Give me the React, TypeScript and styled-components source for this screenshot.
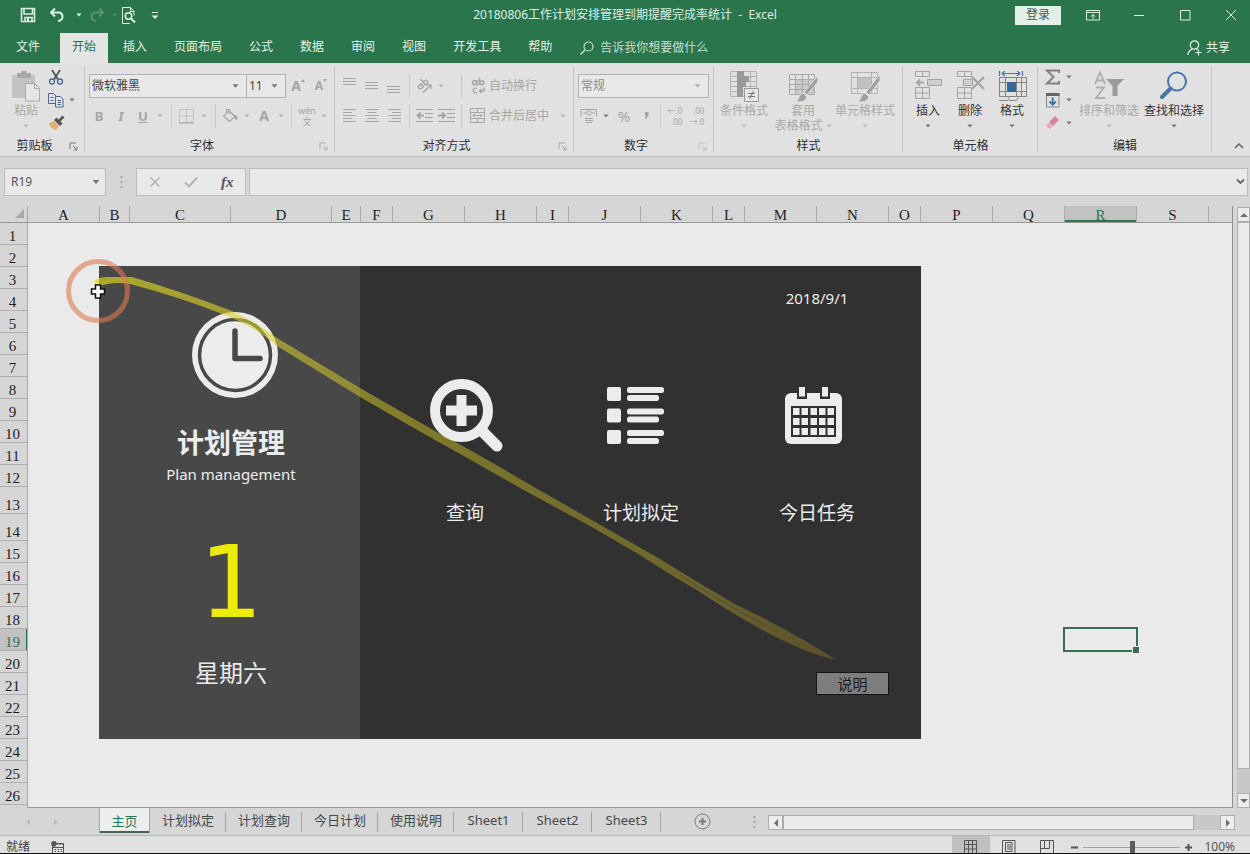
import React from "react";
import styled, { createGlobalStyle, css } from "styled-components";

const green = "#2b754d";
const ui = `"Noto Sans", "Noto Sans CJK SC", sans-serif`;
const dim = "#a6a6a6";
const dark = "#333333";

const GlobalStyle = createGlobalStyle`
  * { box-sizing: border-box; }
  body { margin: 0; background: #d6d6d6; font: 12px/16px ${ui}; color: ${dark}; }
  button, input, select { font: inherit; color: inherit; border: 0; background: none; padding: 0; margin: 0; border-radius: 0; outline: none; }
  button { display: flex; align-items: center; justify-content: center; white-space: nowrap; }
`;

const Page = styled.div`
  min-height: 100vh;
  display: flex;
  flex-direction: column;
  overflow: hidden;
`;

const Icon = styled.svg.attrs({ "aria-hidden": true })`
  display: block;
  flex: none;
  fill: none;
  stroke: currentColor;
`;

/* ---------- title bar and ribbon tabs ---------- */

const TitleBar = styled.header`
  display: grid;
  grid-template-columns: 1fr auto 1fr;
  align-items: center;
  height: 30px;
  background: ${green};
  color: #dcefe3;
`;

const QuickBar = styled.div`
  display: flex;
  align-items: center;
  padding-left: 18px;
`;

const QuickButton = styled.button<{ $w?: number; $faded?: boolean }>`
  width: ${(p) => p.$w ?? 20}px;
  height: 24px;
  opacity: ${(p) => (p.$faded ? 0.25 : 1)};
`;

const WindowBar = styled.div`
  display: flex;
  align-items: center;
  justify-content: flex-end;
  gap: 26px;
  padding-right: 9px;
`;

const SignIn = styled.button`
  width: 46px;
  height: 19px;
  margin-right: -4px;
  background: #e3efe7;
  color: #3c5c4a;
`;

const WindowButton = styled.button`
  width: 20px;
  height: 24px;
`;

const TabBar = styled.nav`
  display: flex;
  align-items: stretch;
  gap: 3px;
  height: 33px;
  padding: 3px 16px 0 4px;
  background: ${green};
  color: #e3f1e8;
`;

const RibbonTab = styled.button<{ $active?: boolean; $file?: boolean }>`
  padding: 0 12px 2px;
  margin-right: ${(p) => (p.$file ? 5 : 0)}px;
  background: ${(p) => (p.$active ? "#e3e4e3" : "transparent")};
  color: ${(p) => (p.$active ? green : "inherit")};
`;

const Tell = styled.button`
  gap: 6px;
  padding-left: 13px;
  color: #c5dfd0;
`;

const Share = styled.button`
  gap: 4px;
  margin-left: auto;
  padding-right: 4px;
`;

/* ---------- ribbon ---------- */

const Ribbon = styled.section`
  display: flex;
  height: 94px;
  padding-bottom: 1px;
  background: #e1e1e1;
  border-bottom: 1px solid #bdbdbd;
`;

const Group = styled.div<{ $w: number }>`
  display: flex;
  flex-direction: column;
  flex: none;
  width: ${(p) => p.$w}px;
  background: linear-gradient(#c4c4c4, #c4c4c4) right 4px / 1px 85px no-repeat;
`;

const GroupBody = styled.div<{ $pad?: number }>`
  display: flex;
  flex: 1;
  padding: 0 4px 0 ${(p) => p.$pad ?? 4}px;
`;

const GroupFoot = styled.div<{ $launch?: boolean }>`
  display: grid;
  grid-template-columns: ${(p) => (p.$launch ? "1fr 16px" : "1fr")};
  align-items: center;
  height: 18px;
  color: #2e2e2e;
  text-align: center;
`;

const Rows = styled.div`
  display: flex;
  flex-direction: column;
  gap: 6px;
  flex: 1;
  padding-top: 11px;
`;

const Row = styled.div`
  display: flex;
  align-items: center;
  height: 24px;
`;

const AlignRow = styled.div`
  display: grid;
  grid-template-columns: 22px 22px 22px 8px 44px 8px 1fr;
  align-items: center;
  height: 24px;
`;

const Cell = styled.div`
  display: flex;
  align-items: center;
`;

const Tool = styled.button<{ $w?: number; $on?: boolean }>`
  width: ${(p) => p.$w ?? 22}px;
  height: 24px;
  flex: none;
  color: ${(p) => (p.$on ? "#666" : dim)};
`;

const Glyph = styled.span<{ $size?: number; $italic?: boolean; $underline?: boolean }>`
  font-size: ${(p) => p.$size ?? 13}px;
  font-weight: 700;
  font-style: ${(p) => (p.$italic ? "italic" : "normal")};
  text-decoration: ${(p) => (p.$underline ? "underline" : "none")};
`;

const LabelTool = styled.button`
  justify-content: flex-start;
  gap: 3px;
  height: 24px;
  padding-left: 5px;
  color: ${dim};
  flex: 1;
`;

const Push = styled.span`
  margin-left: auto;
  padding-right: 4px;
`;

const Line = styled.span`
  width: 8px;
  height: 24px;
  flex: none;
  background: linear-gradient(#c9c9c9, #c9c9c9) center / 1px 100% no-repeat;
`;

const SelectWrap = styled.label<{ $w: number; $off?: boolean }>`
  display: grid;
  grid-template-columns: 1fr 14px;
  align-items: center;
  width: ${(p) => p.$w}px;
  height: 24px;
  border: 1px solid #b3b3b3;
  background: #e8e8e8;
  color: ${(p) => (p.$off ? "#8c8c8c" : "#444")};
  & + & { border-left: 0; }
  select { grid-area: 1 / 1 / 2 / 3; appearance: none; height: 22px; padding-left: 2px; width: 100%; }
  svg { grid-area: 1 / 2; pointer-events: none; }
`;

const Big = styled.button<{ $w: number; $on?: boolean }>`
  flex-direction: column;
  justify-content: flex-start;
  width: ${(p) => p.$w}px;
  flex: none;
  padding-top: 8px;
  line-height: 15px;
  color: ${(p) => (p.$on ? dark : "#a9a9a9")};
`;

const BigCaret = styled.span`
  display: flex;
  align-items: center;
  height: 15px;
`;

const WithCaret = styled.span`
  display: flex;
  align-items: center;
  gap: 3px;
`;

const SmallStack = styled.div<{ $w: number }>`
  display: flex;
  flex-direction: column;
  flex: none;
  width: ${(p) => p.$w}px;
  padding-top: 2px;
`;

const SmallTool = styled.button<{ $inset?: boolean }>`
  justify-content: flex-start;
  gap: 5px;
  height: 23px;
  padding-left: ${(p) => (p.$inset ? 6 : 0)}px;
  color: #666;
`;

const Collapse = styled.button`
  align-self: flex-end;
  margin-left: auto;
  width: 22px;
  height: 18px;
  color: #666;
`;

/* ---------- formula bar ---------- */

const FormulaBar = styled.div`
  display: flex;
  align-items: center;
  height: 49px;
  padding: 0 2px 0 4px;
  background: #d6d6d6;
`;

const fieldBox = css`
  display: flex;
  align-items: center;
  height: 28px;
  background: #e9e9e9;
  border: 1px solid #bcbcbc;
`;

const NameBox = styled.label`
  ${fieldBox}
  width: 102px;
  padding: 0 5px 0 6px;
  color: #555;
  input { flex: 1; min-width: 0; }
`;

const Dots = styled.span`
  width: 30px;
  display: flex;
  justify-content: center;
  color: #a5a5a5;
`;

const FormulaTools = styled.div`
  ${fieldBox}
  width: 110px;
  justify-content: space-around;
  color: #b4b4b4;
`;

const FormulaInput = styled.label`
  ${fieldBox}
  flex: 1;
  margin-left: 3px;
  padding: 0 2px 0 4px;
  color: #666;
  input { flex: 1; min-width: 0; }
`;

const Fx = styled.span`
  font: italic 700 15px/16px "Liberation Serif", serif;
  color: #555;
`;

/* ---------- sheet ---------- */

const Workbook = styled.main`
  display: flex;
  flex: 1;
  background: #d6d6d6;
`;

const Sheet = styled.div`
  display: grid;
  grid-template: 17px 1fr / 28px 1fr;
  flex: 1;
  min-width: 0;
  border-right: 1px solid #8f8f8f;
`;

const Corner = styled.button`
  align-items: flex-end;
  justify-content: flex-end;
  padding: 0 3px 4px 0;
  border-right: 1px solid #a6a6a6;
  border-bottom: 1px solid #9a9a9a;
`;

const headFont = css`
  font-family: "Liberation Serif", serif;
  font-size: 15px;
  color: #1e1e1e;
`;

const ColumnHeads = styled.div`
  display: flex;
  overflow: hidden;
  border-bottom: 1px solid #9a9a9a;
`;

const ColumnHead = styled.div<{ $w: number; $on?: boolean }>`
  ${headFont}
  flex: none;
  width: ${(p) => p.$w}px;
  height: 16px;
  line-height: 19px;
  text-align: center;
  border-right: 1px solid #ababab;
  ${(p) => p.$on && css`background: #c2c2c2; color: ${green}; box-shadow: inset 0 -2px ${green};`}
`;

const RowHeads = styled.div`
  border-right: 1px solid #a6a6a6;
`;

const RowHead = styled.div<{ $h: number; $on?: boolean }>`
  ${headFont}
  display: flex;
  align-items: flex-end;
  justify-content: center;
  height: ${(p) => p.$h}px;
  line-height: 15px;
  padding: 0 2px 0 0;
  border-bottom: 1px solid #b0b0b0;
  ${(p) => p.$on && css`background: #c2c2c2; color: ${green}; box-shadow: inset -1px 0 ${green};`}
`;

const Canvas = styled.div`
  position: relative;
  overflow: hidden;
  padding: 43px 0 0 71px;
  background: #eaeaea;
  border-bottom: 1px solid #9a9a9a;
`;

const Selection = styled.div`
  position: absolute;
  left: 1035px;
  top: 404px;
  width: 75px;
  height: 25px;
  border: 2px solid #3a6c52;
  &::after {
    content: "";
    position: absolute;
    right: -3px;
    bottom: -3px;
    width: 6px;
    height: 6px;
    background: #3a6c52;
    border: solid #eaeaea;
    border-width: 1px 0 0 1px;
  }
`;

const Ink = styled.svg`
  position: absolute;
  left: 0;
  top: 0;
  pointer-events: none;
`;

const Dashboard = styled.section`
  display: flex;
  width: 822px;
  height: 473px;
  color: #ececec;
`;

const Side = styled.div`
  display: flex;
  flex-direction: column;
  align-items: center;
  width: 261px;
  padding: 46px 0 0 3px;
  background: #484848;
`;

const SideTitle = styled.h1`
  margin: 27px 0 0;
  font-size: 27px;
  line-height: 36px;
`;

const SideSub = styled.p`
  margin: 3px 0 0;
  font-size: 15px;
  line-height: 20px;
`;

const Day = styled.div`
  margin-top: 49px;
  font: 100px/100px "DejaVu Sans", sans-serif;
  color: #ecec0c;
`;

const Weekday = styled.div`
  margin-top: 24px;
  font-size: 24px;
  line-height: 32px;
`;

const MainPane = styled.div`
  display: flex;
  flex-direction: column;
  flex: 1;
  padding: 22px 16px 0 17px;
  background: #313131;
`;

const Today = styled.time`
  align-self: flex-end;
  width: 176px;
  text-align: center;
  font-size: 15px;
  line-height: 20px;
`;

const Actions = styled.div`
  display: grid;
  grid-template-columns: repeat(3, 1fr);
  margin-top: 70px;
`;

const Action = styled.button`
  flex-direction: column;
  gap: 46px;
  font-size: 19px;
  line-height: 26px;
`;

const Help = styled.button`
  align-self: flex-end;
  width: 73px;
  height: 23px;
  margin: 146px 16px 0 0;
  background: #7d7d7d;
  border: 1px solid #151515;
  color: #1c1c1c;
  font-size: 15px;
`;

/* ---------- scroll bars, sheet tabs, status bar ---------- */

const VScroll = styled.div`
  display: flex;
  flex-direction: column;
  width: 13px;
  margin: 1px 0 0 4px;
  background: #c8c8c8;
`;

const ScrollButton = styled.button`
  flex: none;
  width: 15px;
  height: 15px;
  background: #ededed;
  border: 1px solid #adadad;
  color: #707070;
  ${VScroll} & { width: 13px; }
`;

const VThumb = styled.div`
  flex: 1;
  margin-bottom: 24px;
  background: #ebebeb;
  border: 1px solid #adadad;
`;

const SheetBar = styled.div`
  display: flex;
  align-items: flex-start;
  height: 28px;
  background: #d6d6d6;
  border-bottom: 1px solid #b8b8b8;
`;

const SheetNav = styled.div`
  display: flex;
  align-items: center;
  justify-content: center;
  gap: 20px;
  width: 99px;
  height: 27px;
  padding-right: 15px;
  color: #b9b9b9;
`;

const SheetTab = styled.button<{ $active?: boolean }>`
  height: 24px;
  min-width: 69px;
  padding: 0 12px;
  font-size: 13px;
  color: #484848;
  background: linear-gradient(#a5a5a5, #a5a5a5) right 4px / 1px 20px no-repeat;
  ${(p) =>
    p.$active &&
    css`
      height: 25px;
      min-width: 51px;
      padding: 0 11px;
      background: #ecefed;
      border: solid #a5a5a5;
      border-width: 0 1px;
      color: ${green};
      box-shadow: inset 0 -2px #3f6b54;
    `}
`;

const AddSheet = styled.button`
  width: 20px;
  height: 27px;
  margin-left: 31px;
  color: #7c7c7c;
`;

const HScroll = styled.div`
  display: flex;
  flex: 1;
  max-width: 467px;
  height: 15px;
  margin: 7px 15px 0 auto;
  background: #c8c8c8;
`;

const HThumb = styled.div`
  flex: 1;
  margin-right: 26px;
  background: #ebebeb;
  border: 1px solid #adadad;
`;

const SheetDots = styled.span`
  display: flex;
  align-items: center;
  height: 27px;
  padding-left: 41px;
  color: #a5a5a5;
`;

const StatusBar = styled.footer`
  display: flex;
  align-items: flex-start;
  height: 18px;
  padding-left: 6px;
  overflow: hidden;
  background: #e0e0e0;
  border-bottom: 1px solid #111;
  line-height: 22px;
  color: #444;
`;

const Macro = styled.button`
  width: 14px;
  height: 22px;
  margin-left: 20px;
  color: #555;
`;

const ViewButton = styled.button<{ $on?: boolean }>`
  width: 38px;
  height: 22px;
  background: ${(p) => (p.$on ? "#c0c0c0" : "transparent")};
  color: #555;
`;

const Views = styled.div`
  display: flex;
  margin-left: auto;
`;

const ZoomBox = styled.div`
  display: flex;
  align-items: center;
  height: 22px;
  gap: 4px;
  padding: 0 15px 0 4px;
  color: #555;
  button { width: 9px; height: 20px; }
  output { margin-left: 7px; }
`;

const ZoomSlider = styled.input`
  appearance: none;
  width: 97px;
  height: 12px;
  background: linear-gradient(#a0a0a0, #a0a0a0) center / 100% 1px no-repeat;
  &::-webkit-slider-thumb { appearance: none; width: 5px; height: 12px; background: #5e5e5e; }
`;

/* ---------- drawings ---------- */

const Caret = ({ c = "#777", w = 7 }: { c?: string; w?: number }) => (
  <Icon width={w} height="4" viewBox="0 0 8 4" style={{ color: c }}>
    <path d="M0.5 0h7L4 4z" fill="currentColor" stroke="none" />
  </Icon>
);

const CaretTool = ({ w = 12, c = "#b5b5b5" }: { w?: number; c?: string }) => (
  <Tool $w={w} aria-label="更多">
    <Caret c={c} w={6} />
  </Tool>
);

const Lines = ({ rows, y = 2, center, right }: { rows: number[]; y?: number; center?: boolean; right?: boolean }) => (
  <Icon width="14" height="18" viewBox="0 0 14 18">
    {rows.map((w, i) => {
      const x = center ? (14 - w) / 2 : right ? 14 - w : 0;
      return <path key={i} d={`M${x} ${y + i * 3 + 0.5}h${w}`} />;
    })}
  </Icon>
);

const Launcher = ({ c = "#aaa" }: { c?: string }) => (
  <Icon width="9" height="9" viewBox="0 0 9 9" style={{ color: c }}>
    <path d="M1 7V1h6M4 4l3 3M8 4.500v3.500h-3.500" />
  </Icon>
);

const Triangle = ({ d }: { d: string }) => (
  <Icon width="8" height="8" viewBox="0 0 8 8">
    <path d={d} fill="currentColor" stroke="none" />
  </Icon>
);

const VDots = () => (
  <Icon width="3" height="12" viewBox="0 0 3 12">
    <path d="M1.500 0v2M1.500 5v2M1.500 10v2" strokeWidth="2" />
  </Icon>
);

const TableArt = () => (
  <>
    <path d="M2.500 3.500h25v20h-25zM2.500 8.500h25M2.500 13.500h25M2.500 18.500h25M8.500 3.500v20M15.500 3.500v20M21.500 3.500v20" stroke="#a9a9a9" />
    <path d="M31 5v6L20 24l-3-3L28 8z" fill="#a0a0a0" stroke="#e1e1e1" />
    <path d="M16 22l4 4c-2 5-6 5-11 5 3-2 2-7 7-9z" fill="#a0a0a0" stroke="#e1e1e1" />
  </>
);

const columns: [string, number][] = [
  ["A", 72], ["B", 30], ["C", 101], ["D", 101], ["E", 29], ["F", 32], ["G", 72], ["H", 72], ["I", 32], ["J", 72],
  ["K", 72], ["L", 32], ["M", 72], ["N", 72], ["O", 32], ["P", 72], ["Q", 72], ["R", 72], ["S", 72],
];
const rowNumbers = Array.from({ length: 26 }, (_, i) => i + 1);
const sheetNames = ["主页", "计划拟定", "计划查询", "今日计划", "使用说明", "Sheet1", "Sheet2", "Sheet3"];
const tabNames = ["文件", "开始", "插入", "页面布局", "公式", "数据", "审阅", "视图", "开发工具", "帮助"];

const Foot = ({ text, launch }: { text: string; launch?: string }) => (
  <GroupFoot $launch={!!launch}>
    <span>{text}</span>
    {launch && <Launcher c={launch} />}
  </GroupFoot>
);

function TopBars() {
  return (
    <>
      <TitleBar>
        <QuickBar>
          <QuickButton aria-label="保存">
            <Icon width="16" height="16" viewBox="0 0 16 16">
              <path d="M1.500 1.500h13v13h-13zM4 1.500v5.500h8.500v-5.500M5 14.500v-4h7v4" strokeWidth="1.6" />
              <path d="M7 11h2v3H7z" fill="currentColor" stroke="none" />
            </Icon>
          </QuickButton>
          <QuickButton $w={38} aria-label="撤销">
            <Icon width="16" height="16" viewBox="0 0 16 16">
              <path d="M6 1.500L2 5.500l4 4M2 5.500h7c6 0 6 8 0 8.500" strokeWidth="2" />
            </Icon>
          </QuickButton>
          <Caret c="#dcefe3" w={6} />
          <QuickButton $w={30} $faded aria-label="重做">
            <Icon width="16" height="16" viewBox="0 0 16 16">
              <path d="M10 1.500l4 4-4 4M14 5.500H7c-6 0-6 8 0 8.500" strokeWidth="2" />
            </Icon>
          </QuickButton>
          <Caret c="#4c8a69" w={6} />
          <QuickButton $w={20} aria-label="打印预览">
            <Icon width="15" height="17" viewBox="0 0 15 17">
              <path d="M9 16.500H1.500V.500h8l3.500 4v4M9.500.500v4H13" />
              <circle cx="7.500" cy="9" r="3.200" strokeWidth="1.500" />
              <path d="M10 11.500l4 4" strokeWidth="2.200" />
            </Icon>
          </QuickButton>
          <QuickButton $w={34} aria-label="自定义快速访问工具栏">
            <Icon width="8" height="9" viewBox="0 0 8 9">
              <path d="M1 1.500h6" />
              <path d="M.500 4.500h7L4 8z" fill="currentColor" stroke="none" />
            </Icon>
          </QuickButton>
        </QuickBar>
        <span>20180806工作计划安排管理到期提醒完成率统计&nbsp; -&nbsp; Excel</span>
        <WindowBar>
          <SignIn>登录</SignIn>
          <WindowButton aria-label="功能区显示选项">
            <Icon width="14" height="12" viewBox="0 0 14 12">
              <path d="M.500 1.500h13v9.500H.500zM.500 3.500h13M7 10V5.500M5 7.500l2-2 2 2" />
            </Icon>
          </WindowButton>
          <WindowButton aria-label="最小化">
            <Icon width="11" height="11" viewBox="0 0 11 11"><path d="M0 5.500h10" /></Icon>
          </WindowButton>
          <WindowButton aria-label="最大化">
            <Icon width="11" height="11" viewBox="0 0 11 11"><path d="M.500.500h9.500v9.500H.500z" /></Icon>
          </WindowButton>
          <WindowButton aria-label="关闭">
            <Icon width="12" height="12" viewBox="0 0 12 12"><path d="M1 1l10 10M11 1L1 11" /></Icon>
          </WindowButton>
        </WindowBar>
      </TitleBar>
      <TabBar>
        {tabNames.map((t, i) => (
          <RibbonTab key={t} $active={i === 1} $file={i === 0}>{t}</RibbonTab>
        ))}
        <Tell>
          <Icon width="14" height="14" viewBox="0 0 14 14">
            <circle cx="8.500" cy="5.500" r="4.500" strokeWidth="1.200" />
            <path d="M5 9L.500 13.500" strokeWidth="1.400" />
          </Icon>
          告诉我你想要做什么
        </Tell>
        <Share>
          <Icon width="15" height="16" viewBox="0 0 15 16">
            <circle cx="7.500" cy="5" r="4.200" strokeWidth="1.200" />
            <path d="M.800 15c.300-3.500 2-5 4.500-6M9.500 8.500l1 1M11.500 9.500v6M8.500 12.500h6" strokeWidth="1.200" />
          </Icon>
          共享
        </Share>
      </TabBar>
    </>
  );
}

function RibbonPanel() {
  return (
    <Ribbon>
      <Group $w={85}>
        <GroupBody $pad={10}>
          <Big $w={32}>
            <Icon width="30" height="32" viewBox="0 0 30 32">
              <path d="M1 4h23v23H1z" fill="#c3c3c3" stroke="none" />
              <path d="M6 2h4a3 3 0 0 1 6 0h4v5H6z" fill="#a8a8a8" stroke="none" />
              <path d="M14.500 12.500h9l5 5v12.500h-14zM23.500 12.500v5h5" fill="#e6e6e6" stroke="#a9a9a9" />
            </Icon>
            粘贴
            <BigCaret><Caret c="#b5b5b5" w={6} /></BigCaret>
          </Big>
          <SmallStack $w={32}>
            <SmallTool $inset aria-label="剪切">
              <Icon width="16" height="16" viewBox="0 0 16 16">
                <path d="M4 1l6 9.500M12 1L6 10.500" stroke="#555" strokeWidth="1.800" />
                <circle cx="4" cy="12.500" r="2.500" stroke="#4a6690" strokeWidth="1.300" />
                <circle cx="12" cy="12.500" r="2.500" stroke="#4a6690" strokeWidth="1.300" />
              </Icon>
            </SmallTool>
            <SmallTool $inset aria-label="复制">
              <Icon width="16" height="16" viewBox="0 0 16 16" style={{ color: "#4a6690" }}>
                <path d="M7 11.500H.500V1.500h5l3 3M2.500 5.500h3M2.500 8.500h3" />
                <path d="M7.500 4.500h5l2.500 2.500v8H7.500zM9.500 8.500h3.500M9.500 10.500h3.500M9.500 12.500h3.500" fill="#e6e6e6" />
              </Icon>
              <Caret w={6} />
            </SmallTool>
            <SmallTool $inset aria-label="格式刷">
              <Icon width="17" height="16" viewBox="0 0 17 16">
                <path d="M1 8l5-2 5 5-3 4c-3 0-6-3-7-7z" fill="#e0b06c" stroke="none" />
                <path d="M6 5l6 6 2.500-2.500-6-6z" fill="#555" stroke="none" />
                <path d="M11 6l4.500-4.500" stroke="#555" strokeWidth="2.600" />
              </Icon>
            </SmallTool>
          </SmallStack>
        </GroupBody>
        <Foot text="剪贴板" launch="#777" />
      </Group>

      <Group $w={250}>
        <GroupBody>
          <Rows>
            <Row>
              <SelectWrap $w={158}>
                <select aria-label="字体"><option>微软雅黑</option></select>
                <Caret />
              </SelectWrap>
              <SelectWrap $w={39}>
                <select aria-label="字号"><option>11</option></select>
                <Caret />
              </SelectWrap>
              <Tool $w={24} aria-label="增大字号">
                <Glyph $size={14}>A</Glyph>
                <Icon width="4" height="14" viewBox="0 0 4 14"><path d="M0 3l2-3 2 3z" fill="currentColor" stroke="none" /></Icon>
              </Tool>
              <Tool $w={22} aria-label="减小字号">
                <Glyph $size={12}>A</Glyph>
                <Icon width="4" height="14" viewBox="0 0 4 14"><path d="M0 0l2 3 2-3z" fill="currentColor" stroke="none" /></Icon>
              </Tool>
            </Row>
            <Row>
              <Tool $w={20}><Glyph>B</Glyph></Tool>
              <Tool $w={24}><Glyph $italic>I</Glyph></Tool>
              <Tool $w={20}><Glyph $underline>U</Glyph></Tool>
              <CaretTool w={14} />
              <Line />
              <Tool aria-label="边框">
                <Icon width="15" height="15" viewBox="0 0 15 15">
                  <path d="M.500.500h14v13H.500zM7.500.500v13M.500 7h14" strokeDasharray="1 1" />
                  <path d="M0 14h15" />
                </Icon>
              </Tool>
              <CaretTool w={14} />
              <Line />
              <Tool aria-label="填充颜色">
                <Icon width="16" height="16" viewBox="0 0 16 16">
                  <path d="M7 3l6 5.500-5.500 5L1.500 8zM4.500 6V1.500h3V6" strokeWidth="1.200" />
                  <path d="M13 7c2 2 2.500 3 1.500 5-1.500-1-1.500-3-1.500-5z" fill="currentColor" />
                </Icon>
              </Tool>
              <CaretTool />
              <Tool><Glyph $size={14}>A</Glyph></Tool>
              <CaretTool />
              <Line />
              <Tool $w={24} aria-label="拼音指南">
                <Pinyin>
                  <span>wén</span>
                  <span>文</span>
                </Pinyin>
              </Tool>
              <CaretTool w={10} />
            </Row>
          </Rows>
        </GroupBody>
        <Foot text="字体" launch="#aaa" />
      </Group>

      <Group $w={239}>
        <GroupBody>
          <Rows>
            <AlignRow>
              <Tool aria-label="顶端对齐"><Lines rows={[13, 13, 13]} y={1} /></Tool>
              <Tool aria-label="垂直居中"><Lines rows={[13, 13, 13]} y={5} /></Tool>
              <Tool aria-label="底端对齐"><Lines rows={[13, 13, 13]} y={9} /></Tool>
              <Line />
              <Cell>
                <Tool aria-label="方向">
                  <Icon width="18" height="18" viewBox="0 0 18 18">
                    <g transform="rotate(-40 7 7)">
                      <circle cx="4" cy="8" r="2" strokeWidth="1.300" />
                      <path d="M6.500 5.500v5M9 2.500v8" strokeWidth="1.300" />
                      <circle cx="11" cy="8" r="2" strokeWidth="1.300" />
                    </g>
                    <path d="M8 15.500L16 8M16 12V8h-4" strokeWidth="1.300" />
                  </Icon>
                </Tool>
                <CaretTool />
              </Cell>
              <Line />
              <LabelTool>
                <Icon width="16" height="18" viewBox="0 0 16 18">
                  <circle cx="4.500" cy="5.800" r="2" strokeWidth="1.500" />
                  <path d="M7 3v5.500M9.500 .500v8" strokeWidth="1.500" />
                  <circle cx="11.800" cy="5.800" r="2" strokeWidth="1.500" />
                  <path d="M7 11.500c-5-2-5.500 5.500 0 4.200M14 10.500v3.500H9.500M11.500 12l-2 2 2 2" strokeWidth="1.400" />
                </Icon>
                自动换行
              </LabelTool>
            </AlignRow>
            <AlignRow>
              <Tool aria-label="左对齐"><Lines rows={[13, 9, 13, 9, 13]} /></Tool>
              <Tool aria-label="居中"><Lines rows={[13, 9, 13, 9, 13]} center /></Tool>
              <Tool aria-label="右对齐"><Lines rows={[13, 9, 13, 9, 13]} right /></Tool>
              <Line />
              <Cell>
                <Tool aria-label="减少缩进量">
                  <Icon width="17" height="14" viewBox="0 0 17 14">
                    <path d="M0 .500h17M9 4.500h8M9 8.500h8M0 12.500h17" />
                    <path d="M1 6.500h7M4.500 3.500L1.500 6.500l3 3" strokeWidth="1.800" />
                  </Icon>
                </Tool>
                <Tool aria-label="增加缩进量">
                  <Icon width="17" height="14" viewBox="0 0 17 14">
                    <path d="M0 .500h17M9 4.500h8M9 8.500h8M0 12.500h17" />
                    <path d="M0 6.500h7M4 3.500l3 3-3 3" strokeWidth="1.800" />
                  </Icon>
                </Tool>
              </Cell>
              <Line />
              <LabelTool>
                <Icon width="16" height="16" viewBox="0 0 16 16">
                  <path d="M.500.500h14v14H.500zM.500 4.500h14M.500 10.500h14M7.500 .500v4M7.500 10.500v4M3 7.500h9M5 5.500L3 7.500l2 2M10 5.500l2 2-2 2" />
                </Icon>
                合并后居中
                <Push><Caret c="#b5b5b5" w={6} /></Push>
              </LabelTool>
            </AlignRow>
          </Rows>
        </GroupBody>
        <Foot text="对齐方式" launch="#aaa" />
      </Group>

      <Group $w={140}>
        <GroupBody>
          <Rows>
            <Row>
              <SelectWrap $w={131} $off>
                <select aria-label="数字格式"><option>常规</option></select>
                <Caret c="#b5b5b5" />
              </SelectWrap>
            </Row>
            <Row>
              <Tool aria-label="会计数字格式">
                <Icon width="18" height="16" viewBox="0 0 18 16">
                  <path d="M1 8.500V1.500h15.500v7M3 5h3M12 5h3" />
                  <circle cx="9" cy="5" r="2.200" />
                  <path d="M5 10.500h8M5 12.500h8M6 14.500h6" />
                </Icon>
              </Tool>
              <CaretTool c="#777" />
              <Tool $w={24}><PlainGlyph>%</PlainGlyph></Tool>
              <Tool $w={20} aria-label="千位分隔样式">
                <Icon width="5" height="8" viewBox="0 0 5 8"><path d="M1 0h3.500v3.500L2 7H.500L2 4H1z" fill="currentColor" stroke="none" /></Icon>
              </Tool>
              <Line />
              <Tool aria-label="增加小数位数"><Decimals><span>←.0</span><span>.00</span></Decimals></Tool>
              <Tool aria-label="减少小数位数"><Decimals><span>.00</span><span>→.0</span></Decimals></Tool>
            </Row>
          </Rows>
        </GroupBody>
        <Foot text="数字" launch="#bbb" />
      </Group>

      <Group $w={189}>
        <GroupBody $pad={0}>
          <Big $w={60}>
            <Icon width="32" height="32" viewBox="0 0 32 32">
              <path d="M2.500 .500h26v25h-26zM2.500 5.500h26M2.500 10.500h26M2.500 15.500h26M2.500 20.500h26M9.500 .500v25M22.500 .500v25" stroke="#b3b3b3" />
              <path d="M9 0h7v5h-7zM9 5h12v6H9zM9 11h9v5H9zM9 16h6v10H9z" fill="#9a9a9a" stroke="none" />
              <path d="M16.500 17.500h14v13h-14z" fill="#e6e6e6" stroke="#9a9a9a" />
              <path d="M20 22.500h7M20 25.500h7M25.500 20l-4 8" stroke="#777" />
            </Icon>
            条件格式
            <BigCaret><Caret c="#bdbdbd" w={6} /></BigCaret>
          </Big>
          <Big $w={58}>
            <Icon width="32" height="32" viewBox="0 0 32 32">
              <path d="M8 8h20v16H8z" fill="#c9c9c9" stroke="none" />
              <TableArt />
            </Icon>
            套用
            <WithCaret>表格格式 <Caret c="#bdbdbd" w={6} /></WithCaret>
          </Big>
          <Big $w={66}>
            <Icon width="32" height="32" viewBox="0 0 32 32">
              <path d="M2.500 1.500h26v21h-26zM2.500 6.500h26M2.500 17.500h26M8.500 1.500v21M22.500 1.500v21" stroke="#b3b3b3" />
              <path d="M9 7h13v10H9z" fill="#c0c0c0" stroke="none" />
              <path d="M31 4v6L20 24l-3-3L28 7z" fill="#a0a0a0" stroke="#e1e1e1" />
              <path d="M16 22l4 4c-2 5-6 5-11 5 3-2 2-7 7-9z" fill="#a0a0a0" stroke="#e1e1e1" />
            </Icon>
            单元格样式
            <BigCaret><Caret c="#bdbdbd" w={6} /></BigCaret>
          </Big>
        </GroupBody>
        <Foot text="样式" />
      </Group>

      <Group $w={135}>
        <GroupBody>
          <Big $w={42} $on>
            <Icon width="32" height="32" viewBox="0 0 32 32" style={{ color: "#a3a3a3" }}>
              <path d="M3.500 .500h14v5h-14zM10.500 .500v5M3.500 16.500h14v11h-14zM10.500 16.500v11M3.500 22h14" />
              <path d="M5 11.500h7M8 8.500l-3 3 3 3" strokeWidth="1.800" />
              <path d="M15.500 8.500h14v6h-14z" fill="#cfcfcf" />
            </Icon>
            插入
            <BigCaret><Caret w={6} /></BigCaret>
          </Big>
          <Big $w={42} $on>
            <Icon width="32" height="32" viewBox="0 0 32 32" style={{ color: "#a3a3a3" }}>
              <path d="M3.500 .500h14v5h-14zM10.500 .500v5M3.500 16.500h14v11h-14zM10.500 16.500v11M3.500 22h14" />
              <path d="M9.500 8.500h9v6h-9z" fill="#cfcfcf" />
              <path d="M18 6l12 12M30 6L18 18" strokeWidth="2.200" />
            </Icon>
            删除
            <BigCaret><Caret w={6} /></BigCaret>
          </Big>
          <Big $w={42} $on>
            <Icon width="32" height="32" viewBox="0 0 32 32">
              <path d="M3.500 0v5M26.500 0v5M6 2.500h18M9 0L6 2.500 9 5M21 0l3 2.500L21 5" stroke="#4a76ab" strokeWidth="1.200" />
              <path d="M3.500 6.500h27v19h-27zM3.500 11.500h27M3.500 20.500h27M9.500 6.500v19M20.500 6.500v19M25.500 6.500v19" stroke="#858585" />
              <path d="M11 11h9v10h-9z" fill="#38669f" stroke="none" />
              <path d="M3 29.500h7c2 0 3-1 3-3M13 29.500h6c2 0 3-1 3-3" stroke="#858585" />
            </Icon>
            格式
            <BigCaret><Caret w={6} /></BigCaret>
          </Big>
        </GroupBody>
        <Foot text="单元格" />
      </Group>

      <Group $w={174}>
        <GroupBody $pad={7}>
          <SmallStack $w={31}>
            <SmallTool aria-label="自动求和">
              <Icon width="16" height="16" viewBox="0 0 16 16"><path d="M14 4V1.500H2L8.500 8 2 14.500h12V12" strokeWidth="2" stroke="#808080" /></Icon>
              <Caret w={6} />
            </SmallTool>
            <SmallTool aria-label="填充">
              <Icon width="16" height="16" viewBox="0 0 16 16">
                <path d="M1.500 1.500h12.500v13.500H1.500z" stroke="#888" />
                <path d="M1 1h13.500v3H1z" fill="#666" stroke="none" />
                <path d="M7.700 5.500v7M4.500 9.500l3.200 3.200 3.200-3.200" stroke="#3d6cad" strokeWidth="1.800" />
              </Icon>
              <Caret w={6} />
            </SmallTool>
            <SmallTool aria-label="清除">
              <Icon width="16" height="14" viewBox="0 0 16 14">
                <path d="M10 0l4 4-6 6-4-4z" fill="#da819b" stroke="none" />
                <path d="M3.500 6.500l4 4L5 13 1 10z" fill="#e8a6b8" stroke="none" />
              </Icon>
              <Caret w={6} />
            </SmallTool>
          </SmallStack>
          <Big $w={66}>
            <Icon width="32" height="32" viewBox="0 0 32 32">
              <path d="M2 13L7 1.500 12 13M4 9.500h6M3 16.500h8L3 27h9" stroke="#adadad" strokeWidth="1.800" />
              <path d="M13 8h18l-6.500 7v10h-5V15z" fill="#9c9c9c" stroke="none" />
            </Icon>
            排序和筛选
            <BigCaret><Caret c="#bdbdbd" w={6} /></BigCaret>
          </Big>
          <Big $w={64} $on>
            <Icon width="32" height="32" viewBox="0 0 32 32">
              <circle cx="19" cy="10.500" r="9" stroke="#4b75a8" strokeWidth="2" />
              <path d="M12.500 17.500L4 26" stroke="#4b75a8" strokeWidth="4" strokeLinecap="round" />
            </Icon>
            查找和选择
            <BigCaret><Caret w={6} /></BigCaret>
          </Big>
        </GroupBody>
        <Foot text="编辑" />
      </Group>
      <Collapse aria-label="折叠功能区">
        <Icon width="10" height="6" viewBox="0 0 10 6"><path d="M1 5l4-4 4 4" strokeWidth="1.600" /></Icon>
      </Collapse>
    </Ribbon>
  );
}

const Pinyin = styled.span`
  display: grid;
  font-size: 9px;
  line-height: 11px;
  text-align: center;
`;

const PlainGlyph = styled.span`
  font-size: 15px;
`;

const Decimals = styled.span`
  display: grid;
  font: 8px/11px ${ui};
  text-align: right;
`;

function DashboardView() {
  return (
    <Dashboard>
      <Side>
        <Icon width="94" height="86" viewBox="-8 0 94 86">
          <circle cx="43" cy="43" r="43" fill="#ececec" stroke="none" />
          <circle cx="43" cy="43" r="35.500" stroke="#484848" strokeWidth="3.500" />
          <path d="M43 19v27.500h25" stroke="#484848" strokeWidth="5.500" strokeLinecap="round" strokeLinejoin="round" />
        </Icon>
        <SideTitle>计划管理</SideTitle>
        <SideSub>Plan management</SideSub>
        <Day>1</Day>
        <Weekday>星期六</Weekday>
      </Side>
      <MainPane>
        <Today dateTime="2018-09-01">2018/9/1</Today>
        <Actions>
          <Action>
            <Icon width="76" height="76" viewBox="0 0 76 76">
              <circle cx="34.500" cy="32.500" r="26.500" strokeWidth="10" />
              <path d="M34.500 17v31M19 32.500h31" strokeWidth="10" />
              <path d="M54 52l16 16" strokeWidth="11" strokeLinecap="round" />
            </Icon>
            查询
          </Action>
          <Action>
            <Icon width="76" height="76" viewBox="0 0 76 76">
              {[9, 30.5, 52].map((y) => (
                <g key={y} fill="currentColor" stroke="none">
                  <rect x="4" y={y} width="14" height="14" rx="2" />
                  <rect x="24" y={y} width="37" height="6" rx="2.500" />
                  <rect x="24" y={y + 8} width="32" height="6" rx="2.500" />
                </g>
              ))}
            </Icon>
            计划拟定
          </Action>
          <Action>
            <Icon width="76" height="76" viewBox="0 0 76 76">
              <rect x="6" y="15" width="57" height="51" rx="6" fill="currentColor" stroke="none" />
              <path d="M18 9h10v12H18zM41 9h10v12H41zM12 28h45v31H12z" fill="#313131" stroke="none" />
              <path d="M20 9h6v9.500h-6zM43 9h6v9.500h-6z" fill="currentColor" stroke="none" />
              {[30, 40, 50].map((y) =>
                [14, 22.500, 31.500, 40, 48.500].map((x) => (
                  <rect key={`${x}-${y}`} x={x} y={y} width="6.500" height="7" fill="currentColor" stroke="none" />
                ))
              )}
            </Icon>
            今日任务
          </Action>
        </Actions>
        <Help>说明</Help>
      </MainPane>
    </Dashboard>
  );
}

function SheetView() {
  return (
    <Workbook>
      <Sheet>
        <Corner aria-label="全选">
          <Icon width="9" height="9" viewBox="0 0 9 9"><path d="M9 0v9H0z" fill="#a9a9a9" stroke="none" /></Icon>
        </Corner>
        <ColumnHeads>
          {columns.map(([name, w]) => (
            <ColumnHead key={name} $w={w} $on={name === "R"}>{name}</ColumnHead>
          ))}
        </ColumnHeads>
        <RowHeads>
          {rowNumbers.map((n) => (
            <RowHead key={n} $h={n === 13 || n === 14 ? 27 : 22} $on={n === 19}>{n}</RowHead>
          ))}
        </RowHeads>
        <Canvas>
          <DashboardView />
          <Selection />
          <Ink width="820" height="460" viewBox="28 223 820 460">
            <defs>
              <linearGradient id="ink" gradientUnits="userSpaceOnUse" x1="95" y1="280" x2="836" y2="660">
                <stop offset="0" stopColor="#e2da1e" stopOpacity="0.66" />
                <stop offset="0.2" stopColor="#d8d02c" stopOpacity="0.58" />
                <stop offset="0.5" stopColor="#c8be24" stopOpacity="0.48" />
                <stop offset="0.8" stopColor="#c4b428" stopOpacity="0.4" />
                <stop offset="1" stopColor="#b89a20" stopOpacity="0.3" />
              </linearGradient>
            </defs>
            <path
              fill="url(#ink)"
              d="M94 281Q98 277 108 277L132 277Q180 291 232 311Q256 322 277 338Q320 364 360 388Q398 410 435 431Q480 455 520 479L590 519L660 559Q700 584 735 604Q800 636 836 660Q812 655 780 639Q740 619 700 592Q670 575 640 555L590 526L520 488Q480 465 435 440Q398 419 360 397L277 346Q256 328 230 317Q180 297 130 284Q110 281 95 288Z"
            />
            <path fill="none" stroke="#313131" strokeOpacity="0.4" d="M680 575Q715 599 765 625" />
            <circle cx="98" cy="291" r="29.500" fill="none" stroke="#dc7a52" strokeOpacity="0.6" strokeWidth="5" />
            <path
              fill="#ffffff"
              stroke="#111111"
              strokeWidth="1.500"
              d="M95.500 285h5v4h4v5h-4v4h-5v-4h-4v-5h4z"
            />
          </Ink>
        </Canvas>
      </Sheet>
      <VScroll>
        <ScrollButton aria-label="向上滚动"><Triangle d="M0 6h8L4 2z" /></ScrollButton>
        <VThumb />
        <ScrollButton aria-label="向下滚动"><Triangle d="M0 2h8L4 6z" /></ScrollButton>
      </VScroll>
    </Workbook>
  );
}

export default function App() {
  return (
    <Page>
      <GlobalStyle />
      <TopBars />
      <RibbonPanel />
      <FormulaBar>
        <NameBox>
          <input aria-label="名称框" defaultValue="R19" />
          <Caret w={8} />
        </NameBox>
        <Dots><VDots /></Dots>
        <FormulaTools>
          <button aria-label="取消">
            <Icon width="12" height="12" viewBox="0 0 12 12"><path d="M1.500 1.500l9 9M10.500 1.500l-9 9" strokeWidth="1.600" /></Icon>
          </button>
          <button aria-label="输入">
            <Icon width="14" height="12" viewBox="0 0 14 12"><path d="M1 6.500l4 4L13 1.500" strokeWidth="2" /></Icon>
          </button>
          <button aria-label="插入函数"><Fx>fx</Fx></button>
        </FormulaTools>
        <FormulaInput>
          <input aria-label="编辑栏" />
          <Icon width="9" height="7" viewBox="0 0 9 7"><path d="M1 1.500l3.500 3.500L8 1.500" strokeWidth="1.800" /></Icon>
        </FormulaInput>
      </FormulaBar>
      <SheetView />
      <SheetBar>
        <SheetNav>
          <Triangle d="M6 1v6L2 4z" />
          <Triangle d="M2 1v6l4-3z" />
        </SheetNav>
        {sheetNames.map((n, i) => (
          <SheetTab key={n} $active={i === 0}>{n}</SheetTab>
        ))}
        <AddSheet aria-label="新工作表">
          <Icon width="17" height="17" viewBox="0 0 17 17">
            <circle cx="8.500" cy="8.500" r="7.500" />
            <path d="M8.500 5v7M5 8.500h7" strokeWidth="2" />
          </Icon>
        </AddSheet>
        <SheetDots><VDots /></SheetDots>
        <HScroll>
          <ScrollButton aria-label="向左滚动"><Triangle d="M6 0v8L2 4z" /></ScrollButton>
          <HThumb />
          <ScrollButton aria-label="向右滚动"><Triangle d="M2 0v8l4-4z" /></ScrollButton>
        </HScroll>
      </SheetBar>
      <StatusBar>
        <span>就绪</span>
        <Macro aria-label="宏录制">
          <Icon width="13" height="13" viewBox="0 0 13 13">
            <path d="M1.500 4v8.500h11v-10H6M1.500 6.500h11M3.500 8.500h1.500M6.500 8.500h1.500M9.500 8.500h1.500M3.500 10.500h1.500M6.500 10.500h1.500M9.500 10.500h1.500M6 3h6.500" />
            <circle cx="3" cy="2.800" r="2.800" fill="currentColor" stroke="none" />
          </Icon>
        </Macro>
        <Views>
          <ViewButton $on aria-label="普通">
            <Icon width="14" height="14" viewBox="0 0 14 14"><path d="M.500.500h12v13H.500zM4.500.500v13M8.500.500v13M.500 4.500h12M.500 9h12" /></Icon>
          </ViewButton>
          <ViewButton aria-label="页面布局">
            <Icon width="14" height="14" viewBox="0 0 14 14"><path d="M.500.500h12.500v13H.500zM3.500 2.500h6.500v9H3.500zM5 5h4M5 7h4M5 9h4" /></Icon>
          </ViewButton>
          <ViewButton aria-label="分页预览">
            <Icon width="14" height="14" viewBox="0 0 14 14"><path d="M.500.500h13v13H.500zM4.500.500v8M.500 8.500h9M9.500.500v8" /></Icon>
          </ViewButton>
        </Views>
        <ZoomBox>
          <button aria-label="缩小"><Icon width="7" height="7" viewBox="0 0 7 7"><path d="M0 3.500h7" strokeWidth="2" /></Icon></button>
          <ZoomSlider type="range" aria-label="显示比例" min={0} max={100} defaultValue={51} />
          <button aria-label="放大"><Icon width="7" height="7" viewBox="0 0 7 7"><path d="M0 3.500h7M3.500 0v7" strokeWidth="2" /></Icon></button>
          <output>100%</output>
        </ZoomBox>
      </StatusBar>
    </Page>
  );
}
